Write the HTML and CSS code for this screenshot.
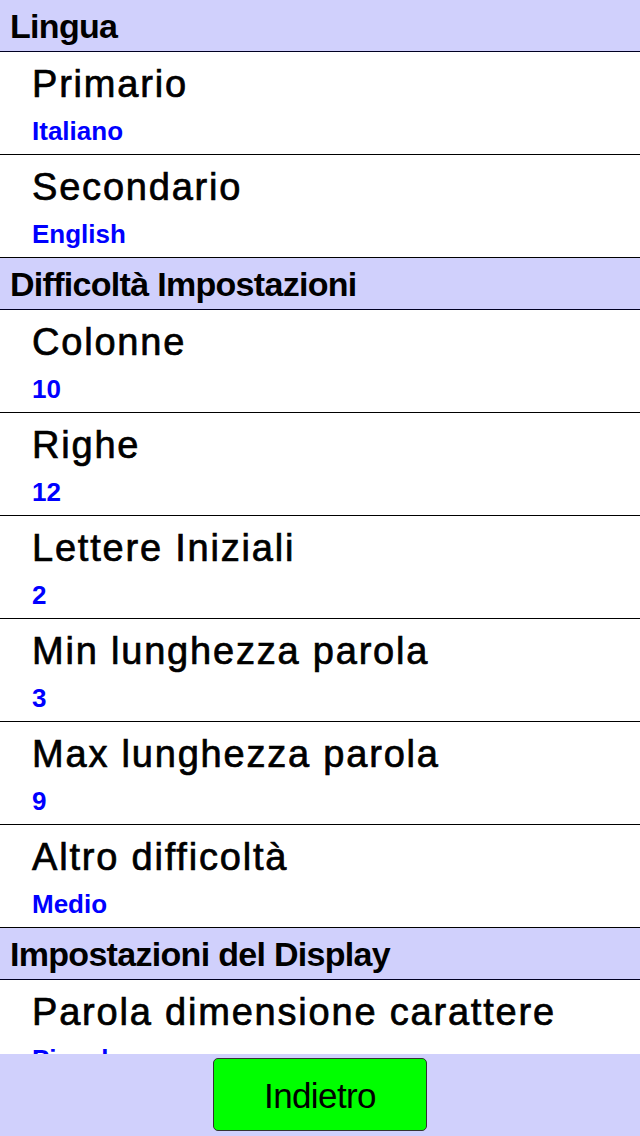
FILE: index.html
```html
<!DOCTYPE html>
<html lang="it">
<head>
  <meta charset="UTF-8" />
  <title>Impostazioni</title>
  <link rel="stylesheet" href="styles.css">
</head>
<body>
  <div class="list">
    <div class="section-head">Lingua</div>
    <div class="item">
      <div class="item-title">Primario</div>
      <div class="item-value">Italiano</div>
    </div>
    <div class="item">
      <div class="item-title">Secondario</div>
      <div class="item-value">English</div>
    </div>

    <div class="section-head">Difficoltà Impostazioni</div>
    <div class="item">
      <div class="item-title">Colonne</div>
      <div class="item-value">10</div>
    </div>
    <div class="item">
      <div class="item-title">Righe</div>
      <div class="item-value">12</div>
    </div>
    <div class="item">
      <div class="item-title">Lettere Iniziali</div>
      <div class="item-value">2</div>
    </div>
    <div class="item">
      <div class="item-title">Min lunghezza parola</div>
      <div class="item-value">3</div>
    </div>
    <div class="item">
      <div class="item-title">Max lunghezza parola</div>
      <div class="item-value">9</div>
    </div>
    <div class="item">
      <div class="item-title">Altro difficoltà</div>
      <div class="item-value">Medio</div>
    </div>

    <div class="section-head">Impostazioni del Display</div>
    <div class="item">
      <div class="item-title">Parola dimensione carattere</div>
      <div class="item-value">Piccolo</div>
    </div>
  </div>

  <div class="footer">
    <button class="back-btn">Indietro</button>
  </div>
</body>
</html>
```

FILE: styles.css
```css
html, body {
  margin: 0;
  padding: 0;
}

body {
  font-family: 'Liberation Sans', Arial, sans-serif;
  background-color: #ffffff;
  color: #000000;
  height: 1136px;
  display: flex;
  flex-direction: column;
  overflow: hidden;
}

.list {
  flex: 1;
  overflow: hidden;
}

.section-head {
  height: 51px;
  line-height: 52px;
  padding-left: 10px;
  background-color: #d0d0fc;
  border-bottom: 1px solid #000022;
  font-size: 34px;
  font-weight: bold;
  letter-spacing: -0.7px;
}

.item {
  height: 102px;
  padding-left: 32px;
  border-bottom: 1px solid #000000;
}

.item-title {
  height: 64px;
  line-height: 64px;
  font-size: 38px;
  letter-spacing: 1.8px;
  -webkit-text-stroke: 0.7px #000000;
}

.item-value {
  line-height: 31px;
  font-size: 26px;
  font-weight: bold;
  color: #0000ff;
}

.footer {
  height: 82px;
  flex-shrink: 0;
  background-color: #d0d0fc;
  display: flex;
  justify-content: center;
  align-items: flex-start;
  padding-top: 4px;
  box-sizing: border-box;
}

.back-btn {
  width: 214px;
  height: 73px;
  padding: 3px 0 0 0;
  background-color: #00ff00;
  border: 1px solid #333333;
  border-radius: 5px;
  font-family: 'Liberation Sans', Arial, sans-serif;
  font-size: 35px;
  letter-spacing: -0.6px;
  color: #000000;
}
```
